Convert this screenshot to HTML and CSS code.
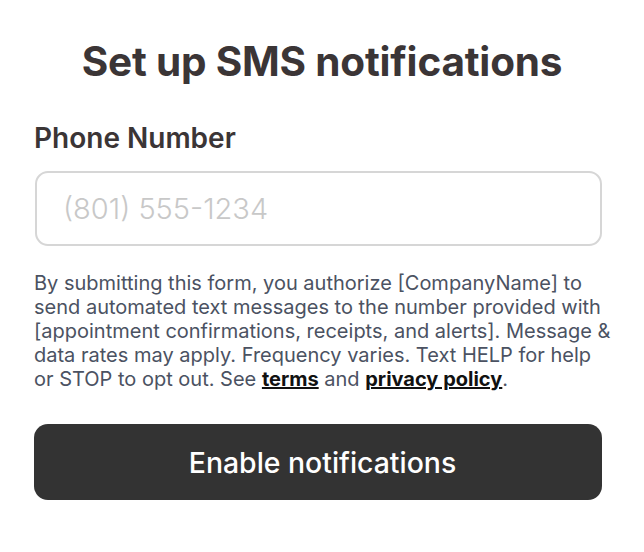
FILE: index.html
```html
<!DOCTYPE html>
<html lang="en">
<head>
  <meta charset="utf-8">
  <title>Set up SMS notifications</title>
  <meta name="viewport" content="width=device-width, initial-scale=1.0">
  <link rel="stylesheet" href="styles.css">
</head>
<body>
  <main class="sms">
    <h1>Set up SMS notifications</h1>
    <form class="sms-form">
      <label class="field-label" for="phone">Phone Number</label>
      <input id="phone" class="phone-input" type="tel" placeholder="(801) 555-1234">
      <p class="consent">
        By submitting this form, you authorize [CompanyName] to send automated text messages to the number provided with [appointment confirmations, receipts, and alerts]. Message &amp; data rates may apply. Frequency varies. Text HELP for help or STOP to opt out. See <a href="#">terms</a> and <a href="#">privacy policy</a>.
      </p>
      <button class="enable-btn" type="button">Enable notifications</button>
    </form>
  </main>
</body>
</html>
```

FILE: styles.css
```css
html {
  box-sizing: border-box;
}

*, *:before, *:after {
  box-sizing: inherit;
}

body {
  margin: 0;
  background: #fff;
  font-family: Inter, 'Noto Sans', sans-serif;
  color: #3b3536;
}

.sms {
  width: 568px;
  margin: 0 auto 0 34px;
  padding-top: 37px;
}

h1 {
  margin: 0 -8px 35px 0;
  font-size: 40.5px;
  line-height: 49px;
  font-weight: 700;
  text-align: center;
  letter-spacing: -0.2px;
}

.sms-form {
  display: flex;
  flex-direction: column;
}

.field-label {
  font-size: 28px;
  line-height: 34px;
  font-weight: 600;
  margin-bottom: 16px;
}

.phone-input {
  height: 75px;
  width: 567px;
  margin-left: 1px;
  border: 2px solid #d6d6d6;
  border-radius: 13px;
  padding: 0 26px;
  font-family: inherit;
  font-size: 29px;
  color: #333;
  outline: none;
}

.phone-input::placeholder {
  color: #c8c8c8;
  font-weight: 300;
}

.consent {
  margin: 25px -12px 0 0;
  font-size: 20px;
  line-height: 24px;
  color: #4b5262;
}

.consent a {
  color: #111;
  font-weight: 700;
  text-decoration: underline;
}

.enable-btn {
  margin-top: 33px;
  height: 76px;
  padding: 0 0 0 9px;
  border: 0;
  border-radius: 14px;
  background: #333333;
  color: #fff;
  font-family: inherit;
  font-size: 28.4px;
  font-weight: 500;
}
```
